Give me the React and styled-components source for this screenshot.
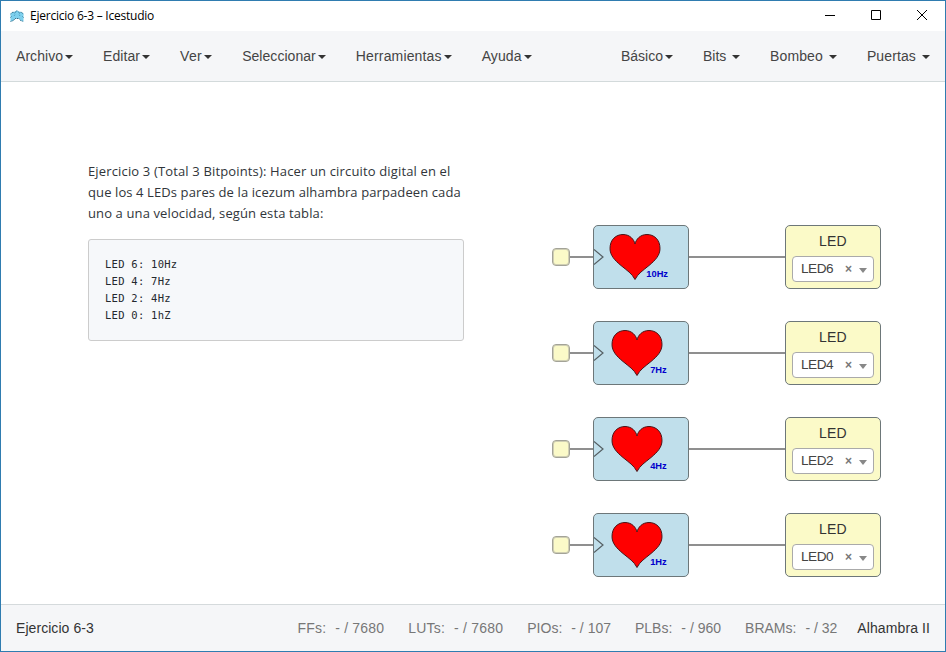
import React from 'react';
import styled, { createGlobalStyle } from 'styled-components';

const GlobalStyle = createGlobalStyle`
  *, *::before, *::after { box-sizing: border-box; }
  body { margin: 0; background: #fff; }
`;

const Window = styled.div`
  width: 946px;
  height: 652px;
  display: flex;
  flex-direction: column;
  overflow: hidden;
  border: 1px solid #2f7cb0;
  background: #fff;
  color: #333;
  font: 14px/20px 'Liberation Sans', Arial, sans-serif;
`;

const TitleBar = styled.header`
  height: 30px;
  flex: none;
  display: flex;
  align-items: center;
  padding: 0 17px 0 9px;
  color: #000;
`;

const Title = styled.h1`
  flex: 1;
  margin: 0 0 0 6px;
  font: 400 12px/16px 'Open Sans', 'Noto Sans', sans-serif;
  letter-spacing: -0.23px;
`;

const WindowControls = styled.div`
  display: flex;
  gap: 34px;
  margin-bottom: 2px;
  svg { display: block; }
`;

const MenuBar = styled.nav`
  height: 51px;
  flex: none;
  display: flex;
  justify-content: space-between;
  align-items: center;
  background: #f5f6f8;
  border-bottom: 1px solid #d3dadb;
`;

const MenuGroup = styled.div`
  display: flex;
`;

const MenuItem = styled.a`
  padding: 0 15px;
  white-space: pre;
  color: #444;
  letter-spacing: ${(p) => p.$tracking}px;
`;

const Caret = styled.span`
  display: inline-block;
  margin-left: 2px;
  vertical-align: middle;
  border-top: 4px solid #333;
  border-left: 4px solid transparent;
  border-right: 4px solid transparent;
`;

const Canvas = styled.main`
  flex: 1;
  display: flex;
  align-items: flex-start;
  padding-left: 87px;
`;

const Note = styled.section`
  width: 376px;
  margin-top: 79px;
`;

const Paragraph = styled.p`
  margin: 0 0 15px;
  color: #30353a;
  font: 13px/21px 'Open Sans', 'Noto Sans', sans-serif;
`;

const NoteLine = styled.span`
  display: block;
  white-space: nowrap;
  letter-spacing: ${(p) => p.$tracking}px;
`;

const Code = styled.pre`
  height: 102px;
  margin: 0;
  padding: 16px;
  border: 1px solid #ccc;
  border-radius: 3px;
  background: #f6f8fa;
  color: #24292e;
  font: 10.5px/17px 'DejaVu Sans Mono', monospace;
  letter-spacing: 0.26px;
`;

const Circuit = styled.section`
  display: flex;
  flex-direction: column;
  gap: 32px;
  margin: 143px 0 0 88px;
`;

const CircuitRow = styled.div`
  display: flex;
  align-items: center;
  height: 64px;
`;

const Pin = styled.div`
  width: 18px;
  height: 18px;
  flex: none;
  border: 1px solid #a3a398;
  box-shadow: inset 0 0 0 1px #d0cfb4;
  border-radius: 4px;
  background: #fbfac8;
`;

const Wire = styled.div`
  width: ${(p) => p.$length}px;
  height: 2px;
  background: #8f8f8f;
`;

const Block = styled.div`
  width: 96px;
  height: 64px;
  border: 1px solid #6d7779;
  border-radius: 5px;
  background: ${(p) => p.$fill};
`;

const BlockArt = styled.svg`
  display: block;
  width: 94px;
  height: 62px;
  font: bold 9.3px 'Liberation Sans', Arial, sans-serif;
`;

const LedBlock = styled(Block)`
  padding: 5px 6px 0;
  text-align: center;
`;

const LedTitle = styled.div`
  margin-bottom: 5px;
  color: #333;
  letter-spacing: 0.2px;
`;

const Select = styled.div`
  display: flex;
  align-items: center;
  height: 26px;
  padding: 0 6px 0 8px;
  border: 1px solid #aaa;
  border-radius: 4px;
  background: #fff;
  color: #444;
`;

const SelectValue = styled.span`
  flex: 1;
  margin-bottom: 1px;
  text-align: left;
  font-size: 13.6px;
  letter-spacing: -0.45px;
`;

const Clear = styled.span`
  margin-right: 7px;
  color: #777;
  font-size: 12px;
  font-weight: bold;
`;

const SelectArrow = styled.span`
  margin-top: 2px;
  border-top: 5px solid #888;
  border-left: 4px solid transparent;
  border-right: 4px solid transparent;
`;

const StatusBar = styled.footer`
  height: 47px;
  flex: none;
  display: flex;
  align-items: center;
  padding: 0 15px;
  border-top: 1px solid #d5dadc;
  background: #f5f6f8;
`;

const Project = styled.span`
  flex: 1;
  letter-spacing: 0.06px;
`;

const Resources = styled.div`
  display: flex;
  gap: 24px;
  margin-right: 20px;
  color: #777;
`;

const Resource = styled.span`
  display: flex;
  gap: 9px;
  letter-spacing: ${(p) => p.$tracking}px;
`;

const Board = styled.span`
  letter-spacing: 0.1px;
`;

const Logo = () => (
  <svg width="14" height="12" viewBox="0 0 14 12">
    <path d="M.5 3.5 3 2 5 1.5 7 .5 9 1.5 11 2 13.5 3.5V11.5L10.5 10.5 9 8.5H5L3.5 10.5.5 11.5Z" fill="#7dd0ee" />
    <path d="M.5 4 3 2 4.5 3 7 .7 9.5 3 11 2 13.5 4M.5 7.5 2 6M13.5 7.5 12 6M.5 11.5 3.5 10.5 5 8.5H9L10.5 10.5 13.5 11.5" fill="none" stroke="#25627f" strokeWidth=".9" strokeDasharray="1.2 .7" />
    <path d="M4 6 5 4.5M10 6 9 4.5" stroke="#4a9bbd" strokeWidth=".8" />
  </svg>
);

const HeartArt = ({ x, rate, labelX }) => (
  <BlockArt viewBox="0 0 94 62">
    <path d="M0 23.5 9 31 0 38.5" fill="none" stroke="#555f63" strokeWidth="1.2" />
    <path
      transform={`translate(${x} 8.5)`}
      d="M25 45C22 39 17 36 11 31C5 26 0 21 0 14C0 5 6 0 13 0C20 0 24 5 25 9.5C26 5 30 0 37 0C44 0 50 5 50 14C50 21 45 26 39 31C33 36 28 39 25 45Z"
      fill="#f00"
      stroke="#4a1518"
    />
    <text x={labelX} y="50.5" fill="#00c">{rate}</text>
  </BlockArt>
);

const leftMenu = [
  { label: 'Archivo', tracking: 0.05 },
  { label: 'Editar', tracking: 0.08 },
  { label: 'Ver', tracking: 0.33 },
  { label: 'Seleccionar', tracking: 0.05 },
  { label: 'Herramientas', tracking: 0.15 },
  { label: 'Ayuda', tracking: 0.1 },
];
const rightMenu = [
  { label: 'Básico', tracking: 0 },
  { label: 'Bits ', tracking: -0.05 },
  { label: 'Bombeo ', tracking: 0.12 },
  { label: 'Puertas ', tracking: 0.12 },
];
const rows = [
  { rate: '10Hz', led: 'LED6', x: 16, labelX: 52.3 },
  { rate: '7Hz', led: 'LED4', x: 18, labelX: 56.2 },
  { rate: '4Hz', led: 'LED2', x: 18, labelX: 56.2 },
  { rate: '1Hz', led: 'LED0', x: 18, labelX: 56.2 },
];
const resources = [
  { name: 'FFs:', usage: '- / 7680', tracking: 0.17 },
  { name: 'LUTs:', usage: '- / 7680', tracking: 0.22 },
  { name: 'PIOs:', usage: '- / 107', tracking: 0 },
  { name: 'PLBs:', usage: '- / 960', tracking: 0 },
  { name: 'BRAMs:', usage: '- / 32', tracking: 0 },
];

const Menu = ({ items }) => (
  <MenuGroup>
    {items.map((item) => (
      <MenuItem key={item.label} $tracking={item.tracking}>{item.label}<Caret /></MenuItem>
    ))}
  </MenuGroup>
);

export default function App() {
  return (
    <Window>
      <GlobalStyle />
      <TitleBar>
        <Logo />
        <Title>Ejercicio 6-3 – Icestudio</Title>
        <WindowControls>
          <svg width="12" height="12" viewBox="0 0 12 12"><path d="M1 6.5H11" stroke="#000" /></svg>
          <svg width="12" height="12" viewBox="0 0 12 12"><path d="M1.5 1.5H10.5V10.5H1.5Z" fill="none" stroke="#000" /></svg>
          <svg width="12" height="12" viewBox="0 0 12 12"><path d="M1 1 11 11M11 1 1 11" stroke="#000" /></svg>
        </WindowControls>
      </TitleBar>
      <MenuBar>
        <Menu items={leftMenu} />
        <Menu items={rightMenu} />
      </MenuBar>
      <Canvas>
        <Note>
          <Paragraph>
            <NoteLine $tracking={0.15}>Ejercicio 3 (Total 3 Bitpoints): Hacer un circuito digital en el</NoteLine>
            <NoteLine $tracking={0.1}>que los 4 LEDs pares de la icezum alhambra parpadeen cada</NoteLine>
            <NoteLine $tracking={0.12}>uno a una velocidad, según esta tabla:</NoteLine>
          </Paragraph>
          <Code>{'LED 6: 10Hz\nLED 4: 7Hz\nLED 2: 4Hz\nLED 0: 1hZ'}</Code>
        </Note>
        <Circuit>
          {rows.map((row) => (
            <CircuitRow key={row.led}>
              <Pin />
              <Wire $length={23} />
              <Block $fill="#c0dfeb">
                <HeartArt x={row.x} rate={row.rate} labelX={row.labelX} />
              </Block>
              <Wire $length={96} />
              <LedBlock $fill="#fbfac8">
                <LedTitle>LED</LedTitle>
                <Select>
                  <SelectValue>{row.led}</SelectValue>
                  <Clear>×</Clear>
                  <SelectArrow />
                </Select>
              </LedBlock>
            </CircuitRow>
          ))}
        </Circuit>
      </Canvas>
      <StatusBar>
        <Project>Ejercicio 6-3</Project>
        <Resources>
          {resources.map(({ name, usage, tracking }) => (
            <Resource key={name} $tracking={tracking}><span>{name}</span><span>{usage}</span></Resource>
          ))}
        </Resources>
        <Board>Alhambra II</Board>
      </StatusBar>
    </Window>
  );
}
